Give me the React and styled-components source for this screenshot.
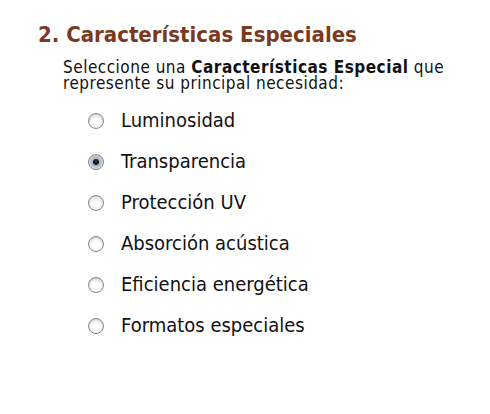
import styled, { createGlobalStyle } from "styled-components";

const GlobalStyle = createGlobalStyle`
  html, body {
    margin: 0;
    padding: 0;
    background: #ffffff;
  }
  body {
    font-family: "DejaVu Sans Condensed", "DejaVu Sans", sans-serif;
  }
`;

const OPTIONS = [
  "Luminosidad",
  "Transparencia",
  "Protección UV",
  "Absorción acústica",
  "Eficiencia energética",
  "Formatos especiales",
];

function App() {
  return (
    <Page>
      <GlobalStyle />
      <Title>2. Características Especiales</Title>
      <Intro>
        Seleccione una <strong>Características Especial</strong> que
        <br />
        represente su principal necesidad:
      </Intro>
      <OptionList>
        {OPTIONS.map((label) => (
          <Option key={label}>
            <Radio $checked={label === "Transparencia"} />
            <Label>{label}</Label>
          </Option>
        ))}
      </OptionList>
    </Page>
  );
}

const Page = styled.div`
  width: 490px;
  height: 414px;
  padding: 22px 0 0 38px;
  box-sizing: border-box;
`;

const Title = styled.h2`
  margin: 0;
  font-size: 22px;
  font-weight: bold;
  color: #7b3a1f;
  line-height: 26px;
`;

const Intro = styled.p`
  margin: 11px 0 0 25px;
  font-size: 17px;
  letter-spacing: 0.5px;
  line-height: 16px;
  color: #111;
  strong {
    font-weight: bold;
  }
`;

const OptionList = styled.div`
  display: flex;
  flex-direction: column;
  gap: 20px;
  margin: 19px 0 0 50px;
`;

const Option = styled.div`
  display: flex;
  align-items: center;
  gap: 17px;
  height: 21px;
`;

const Radio = styled.span`
  flex: none;
  width: 16px;
  height: 16px;
  border-radius: 50%;
  box-sizing: border-box;
  border: 1px solid #8a8a8a;
  background: ${(p) =>
    p.$checked
      ? "radial-gradient(circle, #222 0 2.5px, #9fb0c0 3.5px, #dde4ea 7px)"
      : "radial-gradient(circle at 50% 60%, #ffffff 0 3px, #ededed 7px)"};
  box-shadow: inset 0 1px 1px rgba(0, 0, 0, 0.15);
`;

const Label = styled.span`
  font-size: 20px;
  line-height: 21px;
  color: #111;
`;

export default App;
